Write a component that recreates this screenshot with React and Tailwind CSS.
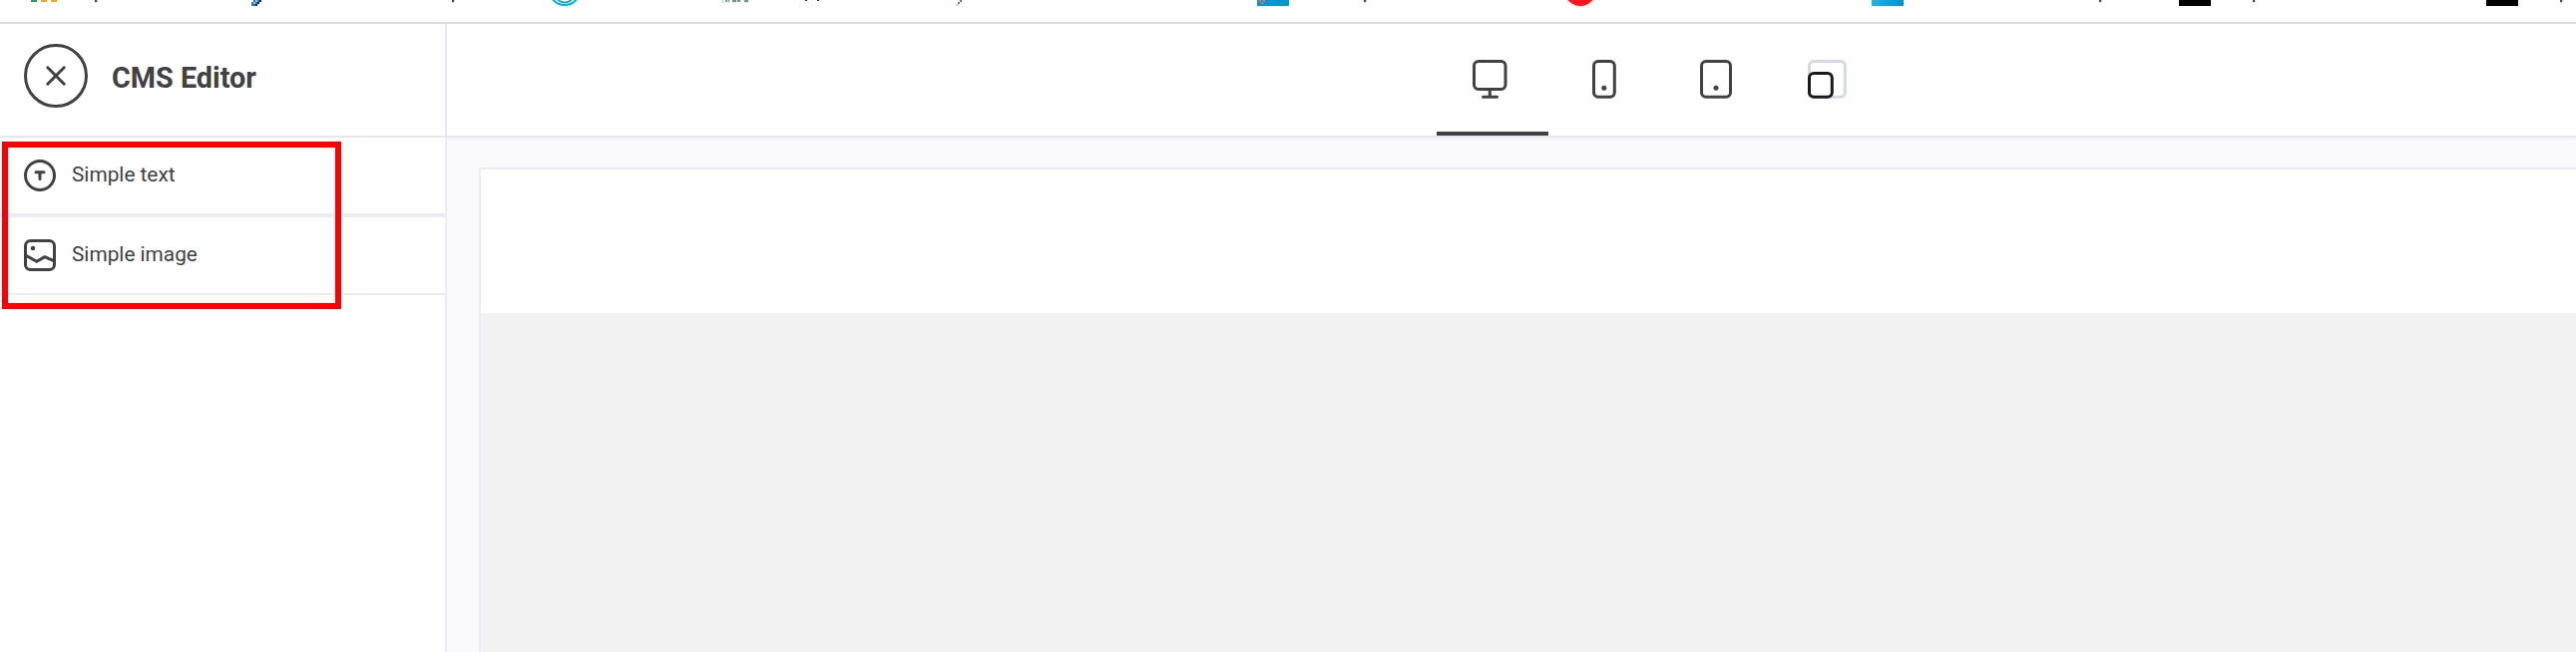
const Stem = ({ x }) => (
  <g>
    <rect x={x} y="0" width="2" height="2" fill="#4a4a4c" />
    <rect x={x + 2} y="0" width="1" height="2" fill="#d0d0d0" />
    <rect x={x} y="2" width="2" height="1" fill="#dadada" />
  </g>
);

const Bookmark = ({ className, children }) => (
  <div className={`h-full shrink-0 ${className}`}>
    <svg className="block h-full w-full overflow-visible" aria-hidden="true">
      {children}
    </svg>
  </div>
);

const BookmarkBar = () => (
  <div className="flex h-6 shrink-0 overflow-hidden border-b-2 border-[#dcdce0] bg-white pl-[31px]">
    <Bookmark className="w-[221px]">
      <rect width="6" height="2" fill="#2a9d60" />
      <rect x="10" width="6" height="2" fill="#f5a623" />
      <rect x="20" width="6" height="2" fill="#f5a623" />
      <Stem x={64} />
    </Bookmark>
    <Bookmark className="w-[302px]">
      <path d="M0 2h2V0h8v2H8v2H6v2H0z" fill="#3172c4" />
      <path d="M2 2h2V0h2v2H4v2H2z" fill="#8fc0f0" />
      <path d="M8 0h2v2H8v2H6v2H4V4h2V2h2z" fill="#082468" />
      <Stem x={201} />
    </Bookmark>
    <Bookmark className="w-[166px]">
      <g fill="none" stroke="#12addd">
        <circle cx="12" cy="-10.5" r="15.5" strokeWidth="2" />
        <path d="M5 0q7 5 14 0" strokeWidth="2" />
      </g>
    </Bookmark>
    <Bookmark className="w-[238px]">
      <path d="M7 0h2v2H7zM10 0h1v2h-1zM14 0h4v2h-4zM19 0h3v2h-3zM26 0h4v2h-4z" fill="#6f9a73" />
      <path d="M3 0h3v3H3zM9 2h2v1H9zM14 2h5v1h-5zM26 2h4v1h-4z" fill="#dcebdd" />
      <rect x="87" width="2" height="1" fill="#29292b" />
      <rect x="99" width="2" height="1" fill="#29292b" />
    </Bookmark>
    <Bookmark className="w-[302px]">
      <path d="M2 2h2V0h2v2H4v2H2z" fill="#4a7cac" />
      <path d="M0 4h3v2H0z" fill="#d2d5da" />
    </Bookmark>
    <Bookmark className="w-[308px]">
      <rect width="32" height="6" fill="#0099cf" />
      <path d="M2 0h2v2h2V0h2v2H6v2H4V2H2z" fill="#ed6c68" />
      <Stem x={107} />
    </Bookmark>
    <Bookmark className="w-[308px]">
      <circle cx="16" cy="-10" r="16" fill="#ff1620" />
    </Bookmark>
    <Bookmark className="w-[308px]">
      <defs>
        <linearGradient id="sky">
          <stop stopColor="#23b1e7" />
          <stop offset="1" stopColor="#0094d2" />
        </linearGradient>
      </defs>
      <rect width="32" height="6" fill="url(#sky)" />
      <Stem x={228} />
    </Bookmark>
    <Bookmark className="w-[308px]">
      <rect width="32" height="6" fill="#000" />
      <Stem x={74} />
    </Bookmark>
    <Bookmark className="w-[90px]">
      <rect width="32" height="6" fill="#000" />
      <Stem x={74} />
    </Bookmark>
  </div>
);

const CloseIcon = () => (
  <svg width="20" height="20" viewBox="0 0 20 20" fill="none" stroke="currentColor" strokeWidth="3" strokeLinecap="round">
    <path d="M1.8 1.8l16.4 16.4M18.2 1.8L1.8 18.2" />
  </svg>
);

const TextIcon = () => (
  <svg width="32" height="32" viewBox="0 0 32 32" fill="none" stroke="currentColor" strokeWidth="3">
    <circle cx="16" cy="16" r="14.5" />
    <path d="M12 12.7h8M16 12.7v6.8" strokeLinecap="round" />
  </svg>
);

const ImageIcon = () => (
  <svg width="32" height="32" viewBox="0 0 32 32" fill="none" stroke="currentColor" strokeWidth="3">
    <rect x="1.5" y="1.5" width="29" height="29" rx="5" />
    <circle cx="9" cy="9" r="2.3" fill="currentColor" stroke="none" />
    <path d="M2 16.3L12.8 22.3L20.8 17.7L30.5 21.8" />
  </svg>
);

const DesktopIcon = () => (
  <svg width="40" height="40" viewBox="0 0 40 40" fill="none" stroke="currentColor" strokeWidth="3" strokeLinecap="round">
    <rect x="1.5" y="1.5" width="31.5" height="28" rx="4.5" />
    <path d="M17.3 30v7M10.5 37.2h14" />
  </svg>
);

const PhoneIcon = () => (
  <svg width="24" height="40" viewBox="0 0 24 40" fill="none" stroke="currentColor" strokeWidth="3">
    <rect x="1.5" y="1.5" width="20.8" height="35.7" rx="4.5" />
    <circle cx="11.8" cy="28.3" r="2.5" fill="currentColor" stroke="none" />
  </svg>
);

const TabletIcon = () => (
  <svg width="32" height="40" viewBox="0 0 32 40" fill="none" stroke="currentColor" strokeWidth="3">
    <rect x="1.5" y="1.5" width="29" height="35.7" rx="4.5" />
    <circle cx="16" cy="28.3" r="2.5" fill="currentColor" stroke="none" />
  </svg>
);

const ResizeIcon = () => (
  <svg width="40" height="40" viewBox="0 0 40 40" fill="none" strokeWidth="3">
    <rect x="1.5" y="1.5" width="35.8" height="35.7" rx="4.5" stroke="#d5d9e4" />
    <rect x="1.5" y="13.5" width="22.8" height="23.7" rx="4.5" stroke="#19191b" fill="#fff" />
  </svg>
);

const devices = [
  { label: "Desktop", Icon: DesktopIcon, active: true },
  { label: "Phone", Icon: PhoneIcon },
  { label: "Tablet", Icon: TabletIcon },
  { label: "Custom size", Icon: ResizeIcon },
];

const BlockItem = ({ Icon, label, className }) => (
  <li className={`flex border-[#e9ecf4] pl-6 ${className}`}>
    <Icon />
    <span className="ml-4 mt-px text-[20.8px] leading-7">{label}</span>
  </li>
);

export default function App() {
  return (
    <div className="relative flex h-[654px] w-[2582px] flex-col overflow-hidden bg-white font-[Roboto,sans-serif] text-[#404145]">
      <BookmarkBar />
      <div className="flex min-h-0 flex-1">
        <aside className="w-[448px] shrink-0 border-r-2 border-[#e9ecf4]">
          <header className="flex h-[114px] border-b-2 border-[#e4e7ed] pl-6 pt-5">
            <button aria-label="Close" className="flex size-16 items-center justify-center rounded-full border-3 border-[#404145]">
              <CloseIcon />
            </button>
            <h1 className="ml-6 mt-[18px] text-[28.8px] leading-8 font-bold">CMS Editor</h1>
          </header>
          <ul>
            <BlockItem Icon={TextIcon} label="Simple text" className="h-20 border-b-4 pt-[22px]" />
            <BlockItem Icon={ImageIcon} label="Simple image" className="h-[78px] border-b-2 pt-[22px]" />
          </ul>
        </aside>
        <main className="flex min-w-0 flex-1 flex-col bg-[#fafafd]">
          <nav className="flex h-[114px] shrink-0 border-b-2 border-[#e4e7ed] bg-white pl-[992px] shadow-[0_1px_3px_rgba(60,70,100,0.06)]">
            {devices.map(({ label, Icon, active }) => (
              <button
                key={label}
                aria-label={label}
                className={`flex w-28 justify-center border-b-4 pt-9 ${active ? "border-[#404145]" : "border-transparent"}`}
              >
                <Icon />
              </button>
            ))}
          </nav>
          <div className="ml-8 mt-[30px] flex flex-1 flex-col border-l-2 border-t-2 border-[#e9ecf4] bg-[#f2f2f2]">
            <div className="h-36 bg-white" />
          </div>
        </main>
      </div>
      <div className="pointer-events-none absolute left-[2px] top-[142px] h-[168px] w-[340px] border-6 border-[#ff0000]" />
    </div>
  );
}
